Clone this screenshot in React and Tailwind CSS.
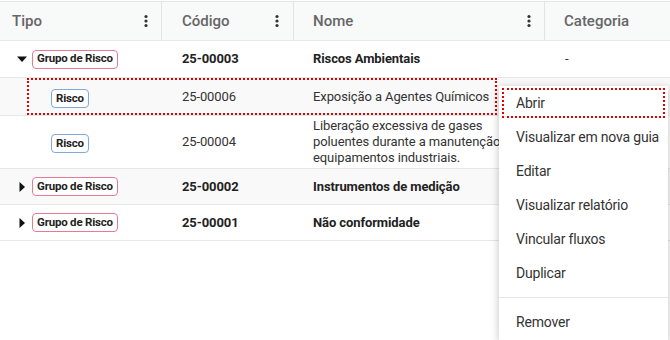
const cols = 'grid grid-cols-[162px_132px_251px_1fr]';

function Dots() {
  return (
    <svg width="4" height="14" viewBox="0 0 4 14" className="fill-[#333]">
      <circle cx="2" cy="2.5" r="1.6" />
      <circle cx="2" cy="7" r="1.6" />
      <circle cx="2" cy="11.5" r="1.6" />
    </svg>
  );
}

function Caret({ open }) {
  return (
    <svg width="10" height="10" viewBox="0 0 10 10" className="fill-[#111]">
      {open ? <path d="M0 2.5 L10 2.5 L5 8 Z" /> : <path d="M2.5 0 L8 5 L2.5 10 Z" />}
    </svg>
  );
}

function Badge({ kind }) {
  const group = kind === 'group';
  return (
    <span
      className={
        'inline-flex h-[19px] items-center rounded-[4px] border bg-white px-[4px] text-[11.5px] font-bold tracking-[-0.2px] text-[#222] ' +
        (group ? 'border-[#e27a98]' : 'border-[#7eaadb]')
      }
    >
      {group ? 'Grupo de Risco' : 'Risco'}
    </span>
  );
}

const rows = [
  { kind: 'group', open: true, code: '25-00003', name: 'Riscos Ambientais', cat: '-', h: 'h-[37px]', bg: 'bg-white' },
  { kind: 'risk', code: '25-00006', name: 'Exposição a Agentes Químicos', cat: '-', h: 'h-[38px]', bg: 'bg-[#f9f9f9]' },
  {
    kind: 'risk',
    code: '25-00004',
    name: 'Liberação excessiva de gases poluentes durante a manutenção de equipamentos industriais.',
    cat: '',
    h: 'h-[53px]',
    bg: 'bg-white',
  },
  { kind: 'group', open: false, code: '25-00002', name: 'Instrumentos de medição', cat: '', h: 'h-[36px]', bg: 'bg-[#f9f9f9]' },
  { kind: 'group', open: false, code: '25-00001', name: 'Não conformidade', cat: '', h: 'h-[36px]', bg: 'bg-white' },
];

const menu = ['Abrir', 'Visualizar em nova guia', 'Editar', 'Visualizar relatório', 'Vincular fluxos', 'Duplicar'];

export default function App() {
  return (
    <div className="relative h-[340px] w-[670px] overflow-hidden bg-white font-['Roboto',sans-serif] text-[#222]">
      <div className="mt-[1px] border-y border-[#e6e6e6]">
        {/* Header */}
        <div className={cols + ' h-[38px] bg-[#f8f9f9] text-[15px] font-medium text-[#666]'}>
          <div className="flex items-center justify-between border-r border-[#e3e3e3] pl-[12px] pr-[13px]">
            Tipo <Dots />
          </div>
          <div className="flex items-center justify-between border-r border-[#e3e3e3] pl-[20px] pr-[14px]">
            Código <Dots />
          </div>
          <div className="flex items-center justify-between border-r border-[#e3e3e3] pl-[19px] pr-[13px]">
            Nome <Dots />
          </div>
          <div className="flex items-center pl-[19px]">Categoria</div>
        </div>

        {rows.map((r, i) => (
          <div key={r.code} className={cols + ' items-center border-t border-[#e8e8e8] ' + r.h + ' ' + r.bg}>
            <div className="flex items-center">
              {r.kind === 'group' ? (
                <>
                  <span className="flex w-[32px] justify-center pl-[12px]">
                    <Caret open={r.open} />
                  </span>
                  <Badge kind="group" />
                </>
              ) : (
                <span className="pl-[51px]">
                  <Badge kind="risk" />
                </span>
              )}
            </div>
            <div className={'pl-[20px] text-[13px] tracking-[-0.1px] ' + (r.kind === 'group' ? 'font-bold' : 'text-[#333]')}>
              {r.code}
            </div>
            <div
              className={
                'whitespace-nowrap pl-[19px] text-[13px] leading-[16px] tracking-[-0.1px] ' +
                (r.kind === 'group' ? 'font-bold' : 'text-[#333]')
              }
            >
              {i === 2 ? (
                <>
                  Liberação excessiva de gases
                  <br />
                  poluentes durante a manutenção de
                  <br />
                  equipamentos industriais.
                </>
              ) : (
                r.name
              )}
            </div>
            <div className="pl-[20px] text-[13px] text-[#333]">{r.cat}</div>
          </div>
        ))}
      </div>

      {/* selected row outline */}
      <div className="pointer-events-none absolute left-[27px] top-[78px] h-[37px] w-[470px] border-2 border-dotted border-[#e00000]" />

      {/* context menu */}
      <div className="absolute left-[499px] top-[86px] w-[169px] bg-white pb-[1px] text-[14px] tracking-[-0.2px] text-[#333] shadow-[0_2px_8px_rgba(0,0,0,0.25)]">
        {menu.map((m, i) => (
          <div key={m} className="relative flex h-[34px] items-center whitespace-nowrap pl-[17px]">
            {i === 0 && (
              <div className="absolute inset-x-[3px] top-[2px] bottom-[2px] border-2 border-dotted border-[#e00000]" />
            )}
            {m}
          </div>
        ))}
        <div className="my-[7px] border-t border-[#e6e6e6]" />
        <div className="flex h-[34px] items-center pl-[17px]">Remover</div>
      </div>
    </div>
  );
}
